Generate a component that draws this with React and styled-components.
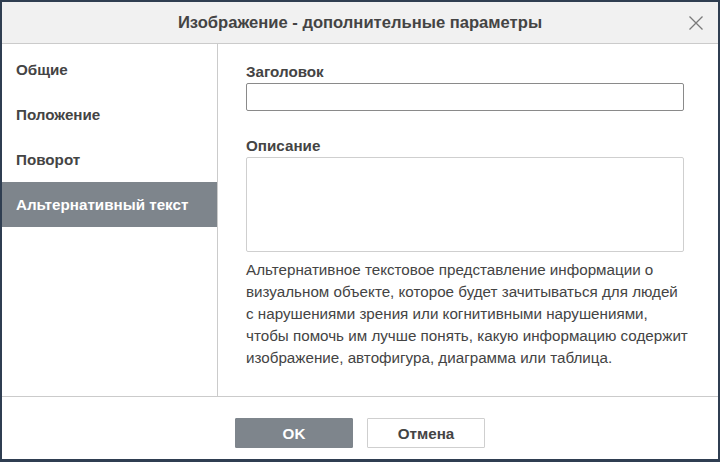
import React, { useState } from "react";
import styled, { createGlobalStyle } from "styled-components";

const GlobalStyle = createGlobalStyle`
  html, body {
    margin: 0;
    padding: 0;
    height: 100%;
    background: #2f3e51;
  }
  #root {
    height: 100%;
  }
  * {
    box-sizing: border-box;
  }
`;

const Frame = styled.div`
  height: 462px;
  padding: 2px 2px 3px 2px;
  background: #2f3e51;
`;

const Dialog = styled.div`
  display: flex;
  flex-direction: column;
  height: 100%;
  background: #fff;
  font-family: "Liberation Sans", Arial, sans-serif;
  color: #444;
`;

const Header = styled.div`
  position: relative;
  display: flex;
  align-items: center;
  justify-content: center;
  height: 42px;
  flex-shrink: 0;
  background: #f1f1f1;
  border-bottom: 1px solid #cbcbcb;
`;

const Title = styled.h1`
  margin: 0;
  font-size: 16.6px;
  font-weight: bold;
  color: #444;
`;

const CloseButton = styled.button`
  position: absolute;
  right: 14px;
  top: 13px;
  width: 16px;
  height: 16px;
  padding: 0;
  border: none;
  background: none;
  cursor: pointer;
  display: flex;
`;

const Body = styled.div`
  display: flex;
  flex: 1;
  min-height: 0;
  border-bottom: 1px solid #cbcbcb;
`;

const Sidebar = styled.nav`
  width: 216px;
  flex-shrink: 0;
  padding-top: 3px;
  border-right: 1px solid #cbcbcb;
`;

const NavItem = styled.div`
  display: flex;
  align-items: center;
  height: 45px;
  padding-left: 14px;
  font-size: 15.2px;
  font-weight: bold;
  cursor: pointer;
  color: ${(p) => (p.$active ? "#fff" : "#444")};
  background: ${(p) => (p.$active ? "#7e858c" : "transparent")};
`;

const Content = styled.div`
  flex: 1;
  padding: 19px 34px 0 28px;
`;

const Label = styled.div`
  font-size: 15.2px;
  font-weight: bold;
  line-height: 18px;
  margin-bottom: 2px;
`;

const TextInput = styled.input`
  display: block;
  width: 100%;
  height: 28px;
  border: 1px solid #8a8a8a;
  border-radius: 2px;
  padding: 0 6px;
  font-family: inherit;
  font-size: 14px;
  outline: none;
`;

const TextArea = styled.textarea`
  display: block;
  width: 100%;
  height: 95px;
  border: 1px solid #cfcfcf;
  border-radius: 2px;
  padding: 4px 6px;
  font-family: inherit;
  font-size: 14px;
  resize: none;
  outline: none;
`;

const Field = styled.div`
  margin-bottom: ${(p) => p.$gap || 0}px;
`;

const Hint = styled.p`
  margin: 7px -20px 0 0;
  font-size: 15.2px;
  line-height: 22px;
  color: #444;
`;

const Footer = styled.div`
  display: flex;
  justify-content: center;
  gap: 14px;
  padding-top: 21px;
  flex: 0 0 62px;
`;

const Button = styled.button`
  width: 118px;
  height: 30px;
  border-radius: 1px;
  font-family: "Liberation Sans", Arial, sans-serif;
  font-size: 15.2px;
  font-weight: bold;
  cursor: pointer;
  border: 1px solid ${(p) => (p.$primary ? "#7e858c" : "#cfcfcf")};
  background: ${(p) => (p.$primary ? "#7e858c" : "#fff")};
  color: ${(p) => (p.$primary ? "#fff" : "#444")};
`;

const tabs = ["Общие", "Положение", "Поворот", "Альтернативный текст"];

const App = () => {
  const [active, setActive] = useState(3);
  const [title, setTitle] = useState("");
  const [desc, setDesc] = useState("");

  return (
    <>
      <GlobalStyle />
      <Frame>
        <Dialog>
          <Header>
            <Title>Изображение - дополнительные параметры</Title>
            <CloseButton aria-label="Закрыть">
              <svg width="16" height="16" viewBox="0 0 16 16">
                <path d="M1.5 1.5l13 13M14.5 1.5l-13 13" stroke="#7a7a7a" strokeWidth="1.3" fill="none" />
              </svg>
            </CloseButton>
          </Header>
          <Body>
            <Sidebar>
              {tabs.map((t, i) => (
                <NavItem key={t} $active={i === active} onClick={() => setActive(i)}>
                  {t}
                </NavItem>
              ))}
            </Sidebar>
            <Content>
              <Field $gap={26}>
                <Label>Заголовок</Label>
                <TextInput value={title} onChange={(e) => setTitle(e.target.value)} />
              </Field>
              <Field>
                <Label>Описание</Label>
                <TextArea value={desc} onChange={(e) => setDesc(e.target.value)} />
              </Field>
              <Hint>
                Альтернативное текстовое представление информации о<br />
                визуальном объекте, которое будет зачитываться для людей<br />
                с нарушениями зрения или когнитивными нарушениями,<br />
                чтобы помочь им лучше понять, какую информацию содержит<br />
                изображение, автофигура, диаграмма или таблица.
              </Hint>
            </Content>
          </Body>
          <Footer>
            <Button $primary>OK</Button>
            <Button>Отмена</Button>
          </Footer>
        </Dialog>
      </Frame>
    </>
  );
};

export default App;
